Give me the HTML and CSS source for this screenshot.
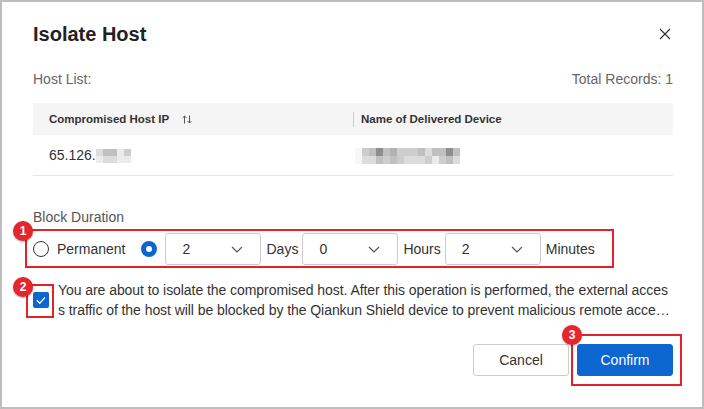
FILE: index.html
```html
<!DOCTYPE html>
<html lang="en">
<head>
<meta charset="UTF-8" />
<title>Isolate Host</title>
<link rel="stylesheet" href="styles.css">
</head>
<body>
<div class="dialog">
  <div class="dialog-header">
    <h1>Isolate Host</h1>
    <svg class="close" width="16" height="16" viewBox="0 0 16 16"><path d="M3 3l10 10M13 3L3 13" stroke="#333" stroke-width="1.2" fill="none"/></svg>
  </div>

  <div class="list-bar">
    <span>Host List:</span>
    <span>Total Records: 1</span>
  </div>

  <table class="host-table">
    <thead>
      <tr>
        <th class="col-ip">Compromised Host IP
          <svg class="sort" width="10" height="9" viewBox="0 0 10 9"><path d="M2.5 8.5V1M0.6 2.9L2.5 1l1.9 1.9M7.5 0.5V8M5.6 6.1L7.5 8l1.9-1.9" stroke="#555" stroke-width="1" fill="none"/></svg>
        </th>
        <th class="col-dev"><span class="col-sep">Name of Delivered Device</span></th>
      </tr>
    </thead>
    <tbody>
      <tr>
        <td class="col-ip">65.126.<span class="pix ip">
          <i class="g2"></i><i class="g4"></i><i class="g4"></i><i class="g1"></i><i class="g3"></i>
          <i class="g1"></i><i class="g2"></i><i class="g2"></i><i class="g1"></i><i class="g1"></i>
        </span></td>
        <td class="col-dev"><span class="pix dev">
          <i class="g0"></i><i class="g3"></i><i class="g4"></i><i class="g6"></i><i class="g4"></i><i class="g5"></i><i class="g3"></i><i class="g3"></i><i class="g3"></i><i class="g4"></i><i class="g2"></i><i class="g4"></i><i class="g4"></i><i class="g6"></i><i class="g4"></i>
          <i class="g0"></i><i class="g2"></i><i class="g2"></i><i class="g4"></i><i class="g3"></i><i class="g4"></i><i class="g3"></i><i class="g2"></i><i class="g2"></i><i class="g2"></i><i class="g3"></i><i class="g1"></i><i class="g3"></i><i class="g4"></i><i class="g2"></i>
        </span></td>
      </tr>
    </tbody>
  </table>

  <div class="field-label">Block Duration</div>
  <div class="duration">
    <span class="radio"></span>
    <span class="radio-text">Permanent</span>
    <span class="radio checked"></span>
    <div class="select"><span>2</span><svg width="12" height="7" viewBox="0 0 12 7"><path d="M1 1l5 5 5-5" stroke="#555" stroke-width="1.2" fill="none"/></svg></div>
    <span class="unit">Days</span>
    <div class="select"><span>0</span><svg width="12" height="7" viewBox="0 0 12 7"><path d="M1 1l5 5 5-5" stroke="#555" stroke-width="1.2" fill="none"/></svg></div>
    <span class="unit">Hours</span>
    <div class="select"><span>2</span><svg width="12" height="7" viewBox="0 0 12 7"><path d="M1 1l5 5 5-5" stroke="#555" stroke-width="1.2" fill="none"/></svg></div>
    <span class="unit">Minutes</span>
    <span class="mark mark-1"></span>
    <span class="badge badge-1">1</span>
  </div>

  <div class="terms">
    <span class="checkbox"><svg width="16" height="16" viewBox="0 0 16 16"><path d="M3.8 8.2l3 3 5.2-5.8" stroke="#fff" stroke-width="1.3" fill="none"/></svg></span>
    <p class="terms-text">You are about to isolate the compromised host. After this operation is performed, the external access traffic of the host will be blocked by the Qiankun Shield device to prevent malicious remote access.</p>
    <span class="mark mark-2"></span>
    <span class="badge badge-2">2</span>
  </div>

  <div class="footer">
    <button class="btn">Cancel</button>
    <span class="confirm-wrap">
      <button class="btn btn-primary">Confirm</button>
      <span class="mark mark-3"></span>
      <span class="badge badge-3">3</span>
    </span>
  </div>
</div>
</body>
</html>
```

FILE: styles.css
```css
body {
  margin: 0;
  font-family: "Liberation Sans", Arial, sans-serif;
  background: #fff;
}
.dialog {
  width: 704px;
  height: 409px;
  box-sizing: border-box;
  border: 2px solid #bdbdbd;
  padding: 18px 29px 0 31px;
  background: #fff;
}
.dialog-header {
  display: flex;
  justify-content: space-between;
  align-items: center;
  height: 28px;
}
h1 {
  margin: 0;
  font-size: 20px;
  line-height: 28px;
  font-weight: bold;
  color: #222;
}
.list-bar {
  display: flex;
  justify-content: space-between;
  margin-top: 21px;
  font-size: 14px;
  line-height: 20px;
  color: #666;
}
.host-table {
  width: 100%;
  margin-top: 14px;
  border-collapse: collapse;
}
.host-table th {
  height: 32px;
  padding: 0;
  background: #f5f5f5;
  text-align: left;
  font-size: 11.5px;
  font-weight: bold;
  color: #333;
}
.host-table td {
  height: 40px;
  padding: 0;
  border-bottom: 1px solid #e6e6e6;
  font-size: 14px;
  color: #333;
}
.host-table .col-ip {
  width: 320px;
  padding-left: 16px;
  box-sizing: border-box;
}
.sort {
  margin-left: 10px;
  vertical-align: -1px;
}
.col-sep {
  display: inline-block;
  border-left: 1px solid #ccc;
  padding-left: 7px;
  line-height: 15px;
}
.host-table td.col-dev {
  padding-left: 2px;
}
.pix {
  display: inline-grid;
  grid-auto-rows: 7px;
  vertical-align: middle;
}
.pix.ip {
  grid-template-columns: repeat(5, 7px);
}
.pix.dev {
  grid-template-columns: repeat(15, 7px);
  grid-auto-rows: 8px;
}
.pix i { display: block; }
.g0 { background: #f6f6f6; }
.g1 { background: #ebebeb; }
.g2 { background: #dcdcdc; }
.g3 { background: #cdcdcd; }
.g4 { background: #c0c0c0; }
.g5 { background: #b2b2b2; }
.g6 { background: #8e8e8e; }

.field-label {
  margin-top: 31px;
  font-size: 14px;
  line-height: 20px;
  color: #555;
}
.duration {
  position: relative;
  display: flex;
  align-items: center;
  height: 32px;
  margin-top: 6px;
  font-size: 14px;
  color: #333;
}
.radio {
  width: 16px;
  height: 16px;
  box-sizing: border-box;
  border: 1px solid #333;
  border-radius: 50%;
  flex-shrink: 0;
}
.radio.checked {
  border: 5px solid #0b66d0;
  margin-left: 16px;
  margin-right: 8px;
}
.radio-text {
  margin-left: 8px;
}
.select {
  width: 96px;
  height: 32px;
  box-sizing: border-box;
  border: 1px solid #ccc;
  border-radius: 3px;
  display: flex;
  align-items: center;
  justify-content: space-between;
  padding: 0 17px 0 16px;
}
.unit {
  margin: 0 4px 0 5px;
}
.terms {
  position: relative;
  display: flex;
  align-items: center;
  gap: 9px;
  margin-top: 15px;
}
.checkbox {
  width: 16px;
  height: 16px;
  background: #0b66d0;
  border-radius: 2px;
  flex-shrink: 0;
}
.checkbox svg { display: block; }
.terms-text {
  flex: 1;
  margin: 0;
  font-size: 14px;
  line-height: 20px;
  letter-spacing: -0.06px;
  color: #333;
  word-break: break-all;
  display: -webkit-box;
  -webkit-line-clamp: 2;
  -webkit-box-orient: vertical;
  overflow: hidden;
}
.footer {
  display: flex;
  justify-content: flex-end;
  gap: 8px;
  margin-top: 24px;
}
.btn {
  width: 96px;
  height: 32px;
  border: 1px solid #ccc;
  border-radius: 3px;
  background: #fff;
  font-family: inherit;
  font-size: 14px;
  color: #333;
  padding: 0;
}
.btn-primary {
  display: block;
  background: #0b66d0;
  border-color: #0b66d0;
  color: #fff;
}
.confirm-wrap {
  position: relative;
}

/* annotation marks */
.mark {
  position: absolute;
  box-sizing: border-box;
  border: 2px solid #e3212a;
}
.mark-1 { left: -8px; top: -4px; width: 589px; height: 39px; }
.mark-2 { left: -7px; top: 4px; width: 28px; height: 34px; }
.mark-3 { left: -6px; top: -10px; width: 111px; height: 52px; }
.badge {
  position: absolute;
  width: 20px;
  height: 20px;
  border-radius: 50%;
  background: #e5262d;
  box-shadow: 0 1px 2px rgba(0,0,0,0.35);
  color: #fff;
  font-size: 12px;
  font-weight: bold;
  line-height: 20px;
  text-align: center;
}
.badge-1 { left: -20px; top: -12px; }
.badge-2 { left: -20px; top: -3px; }
.badge-3 { left: -15px; top: -19px; }
```
